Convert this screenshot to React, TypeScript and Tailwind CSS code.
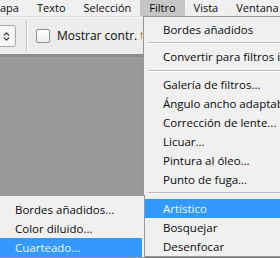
import { ChevronsUpDown } from "lucide-react";

const topMenu = ["apa", "Texto", "Selección", "Filtro", "Vista", "Ventana"];

type Entry = { label?: string; sep?: string; active?: boolean };

const filterMenu: Entry[] = [
  { label: "Bordes añadidos" },
  { sep: "h-[8px] pt-[3px]" },
  { label: "Convertir para filtros inteligentes" },
  { sep: "h-[9px] pt-[4px]" },
  { label: "Galería de filtros..." },
  { label: "Ángulo ancho adaptable..." },
  { label: "Corrección de lente..." },
  { label: "Licuar..." },
  { label: "Pintura al óleo..." },
  { label: "Punto de fuga..." },
  { sep: "h-[10px] pt-[3px]" },
  { label: "Artístico", active: true },
  { label: "Bosquejar" },
  { label: "Desenfocar" },
];

const subMenu: Entry[] = [
  { label: "Bordes añadidos..." },
  { label: "Color diluido..." },
  { label: "Cuarteado...", active: true },
];

function MenuItem({ label, active, pad }: { label: string; active?: boolean; pad: string }) {
  return (
    <div
      className={`flex h-[19px] items-center whitespace-nowrap ${pad} ${
        active ? "bg-[#3399ff] text-[#eef6ff]" : "text-[#0a0a0a]"
      }`}
    >
      {label}
    </div>
  );
}

export default function App() {
  return (
    <div
      className="relative flex h-[258px] w-[280px] flex-col overflow-hidden bg-[#9a9a9a] text-[11.5px]"
      style={{ fontFamily: '"Open Sans", "Noto Sans", sans-serif' }}
    >
      {/* menu bar */}
      <div className="flex h-[17px] shrink-0 items-center border-b border-[#d9d9d9] bg-[#f0f0f0] text-[11px] text-[#0a0a0a]">
        {topMenu.map((m, i) => (
          <div
            key={m}
            className={`flex h-full items-center whitespace-nowrap px-[9px] ${i === 0 ? "ml-[-9px]" : ""} ${
              m === "Filtro" ? "bg-[#c6c6c6]" : ""
            }`}
          >
            {m}
          </div>
        ))}
      </div>

      {/* options bar */}
      <div className="flex h-[37px] shrink-0 items-center border-t border-[#fafafa] bg-[#ececec]">
        <div className="ml-[-6px] flex h-[22px] w-[22px] items-center justify-end rounded-[3px] border border-[#a9a9a9] bg-[#f7f7f7] pr-[3px]">
          <ChevronsUpDown className="h-[11px] w-[11px] text-[#333]" strokeWidth={2.5} />
        </div>
        <div className="ml-[10px] flex h-[30px]">
          <div className="w-px bg-[#c4c4c4]" />
          <div className="w-px bg-[#fbfbfb]" />
        </div>
        <div className="ml-[8px] h-[14px] w-[14px] rounded-[2px] border border-[#8e8e8e] bg-gradient-to-b from-[#ffffff] to-[#ededed]" />
        <span className="ml-[7px] max-w-[85px] overflow-hidden whitespace-nowrap text-[12px] text-[#0a0a0a]">
          Mostrar contr. transf.
        </span>
      </div>
      <div className="h-[3px] shrink-0 bg-[#8c8c8c]" />
      <div className="flex-1" />

      {/* Filtro dropdown */}
      <div className="absolute left-[143px] top-[16px] w-[170px] border border-[#979797] bg-[#f0f0f0] pt-[3px] shadow-[2px_2px_3px_rgba(0,0,0,0.3)]">
        {filterMenu.map((e, i) =>
          e.sep ? (
            <div key={i} className={e.sep}>
              <div className="ml-[4px] h-px bg-[#bdbdbd]" />
              <div className="ml-[4px] h-px bg-[#fdfdfd]" />
            </div>
          ) : (
            <MenuItem key={i} label={e.label!} active={e.active} pad="pl-[18px] ml-[1px]" />
          ),
        )}
      </div>

      {/* Artístico submenu */}
      <div className="absolute left-[-10px] top-[195px] w-[155px] border border-[#979797] bg-[#f0f0f0] pt-[4px] pr-[2px]">
        {subMenu.map((e, i) => (
          <MenuItem key={i} label={e.label!} active={e.active} pad="pl-[24px]" />
        ))}
      </div>
    </div>
  );
}
